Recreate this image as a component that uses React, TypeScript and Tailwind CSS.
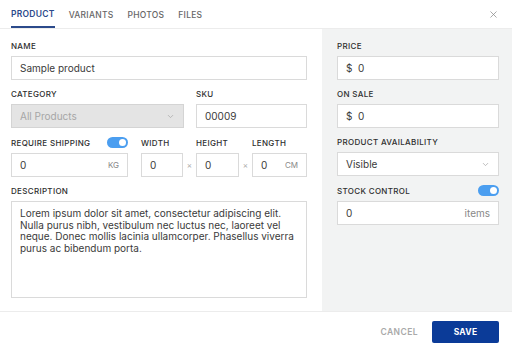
import { ChevronDown, X } from "lucide-react";

const labelClass =
  "block h-[10px] text-[8px] leading-[10px] font-medium uppercase tracking-[0.04em] text-[#2e2e2e]";
const inputClass =
  "flex h-[24px] w-full items-center border border-[#dadada] bg-white px-[8px] text-[10px] text-[#3a3a3a]";

function Toggle() {
  return (
    <span className="flex h-[11px] w-[21px] items-center justify-end rounded-full bg-[#4b9ef0] px-[2px]">
      <span className="size-[7px] rounded-full bg-white" />
    </span>
  );
}

function Field({ label, children, right }: { label: string; children: React.ReactNode; right?: React.ReactNode }) {
  return (
    <div>
      <div className="mb-[5px] flex items-center justify-between">
        <span className={labelClass}>{label}</span>
        {right}
      </div>
      {children}
    </div>
  );
}

export default function App() {
  return (
    <div
      className="flex h-[352px] w-[512px] flex-col bg-white"
      style={{ fontFamily: "Inter, 'Open Sans', sans-serif" }}
    >
      <header className="flex h-[29px] shrink-0 items-stretch border-b border-[#ececec] pl-[11px] pr-[13px]">
        <nav className="flex gap-[14px] text-[8.5px] font-medium uppercase tracking-[0.03em]">
          <span className="flex items-center border-b-2 border-[#2b4a8b] pt-[2px] font-semibold text-[#2b4a8b]">
            Product
          </span>
          <span className="flex items-center pt-[2px] text-[#666]">Variants</span>
          <span className="flex items-center pt-[2px] text-[#666]">Photos</span>
          <span className="flex items-center pt-[2px] text-[#666]">Files</span>
        </nav>
        <div className="ml-auto flex items-center">
          <X className="size-[11px] text-[#888]" strokeWidth={1.6} />
        </div>
      </header>

      <div className="flex min-h-0 flex-1">
        <div className="flex w-[322px] flex-col gap-[9px] pl-[11px] pr-[15px] pt-[12px]">
          <Field label="Name">
            <div className={inputClass}>Sample product</div>
          </Field>

          <div className="flex gap-[12px]">
            <div className="w-[173px]">
              <Field label="Category">
                <div className={`${inputClass} justify-between !border-[#d4d4d4] !bg-[#e4e4e4] !text-[#a6a6a6]`}>
                  All Products
                  <ChevronDown className="size-[9px] text-[#aaa]" />
                </div>
              </Field>
            </div>
            <div className="flex-1">
              <Field label="SKU">
                <div className={inputClass}>00009</div>
              </Field>
            </div>
          </div>

          <div className="flex items-end">
            <div className="w-[117px]">
              <Field label="Require shipping" right={<Toggle />}>
                <div className={`${inputClass} justify-between`}>
                  0<span className="text-[8px] text-[#888]">KG</span>
                </div>
              </Field>
            </div>
            <div className="ml-[13px] w-[42px]">
              <Field label="Width">
                <div className={inputClass}>0</div>
              </Field>
            </div>
            <span className="flex h-[24px] w-[13px] items-center justify-center text-[8px] text-[#aaa]">×</span>
            <div className="w-[43px]">
              <Field label="Height">
                <div className={inputClass}>0</div>
              </Field>
            </div>
            <span className="flex h-[24px] w-[13px] items-center justify-center text-[8px] text-[#aaa]">×</span>
            <div className="flex-1">
              <Field label="Length">
                <div className={`${inputClass} justify-between`}>
                  0<span className="text-[8px] text-[#888]">CM</span>
                </div>
              </Field>
            </div>
          </div>

          <Field label="Description">
            <div className="h-[97px] w-full border border-[#dadada] bg-white px-[8px] py-[6px] text-[10px] leading-[11.5px] text-[#3a3a3a]">
              Lorem ipsum dolor sit amet, consectetur adipiscing elit. Nulla purus nibh, vestibulum nec luctus nec,
              laoreet vel neque. Donec mollis lacinia ullamcorper. Phasellus viverra purus ac bibendum porta.
            </div>
          </Field>
        </div>

        <div className="flex flex-1 flex-col gap-[9px] bg-[#f2f3f3] pl-[15px] pr-[13px] pt-[12px]">
          <Field label="Price">
            <div className={inputClass}>$&nbsp;&nbsp;0</div>
          </Field>
          <Field label="On sale">
            <div className={inputClass}>$&nbsp;&nbsp;0</div>
          </Field>
          <Field label="Product availability">
            <div className={`${inputClass} justify-between`}>
              Visible
              <ChevronDown className="size-[9px] text-[#aaa]" />
            </div>
          </Field>
          <Field label="Stock control" right={<Toggle />}>
            <div className={`${inputClass} justify-between`}>
              0<span className="text-[#888]">items</span>
            </div>
          </Field>
        </div>
      </div>

      <footer className="flex h-[41px] shrink-0 items-center justify-end gap-[14px] border-t border-[#ececec] pr-[13px]">
        <span className="text-[8.5px] font-semibold uppercase tracking-[0.05em] text-[#a9a9a9]">Cancel</span>
        <button className="h-[22px] w-[67px] rounded-[2px] bg-[#0b3b98] text-[8.5px] font-bold uppercase tracking-[0.03em] text-white">
          Save
        </button>
      </footer>
    </div>
  );
}
